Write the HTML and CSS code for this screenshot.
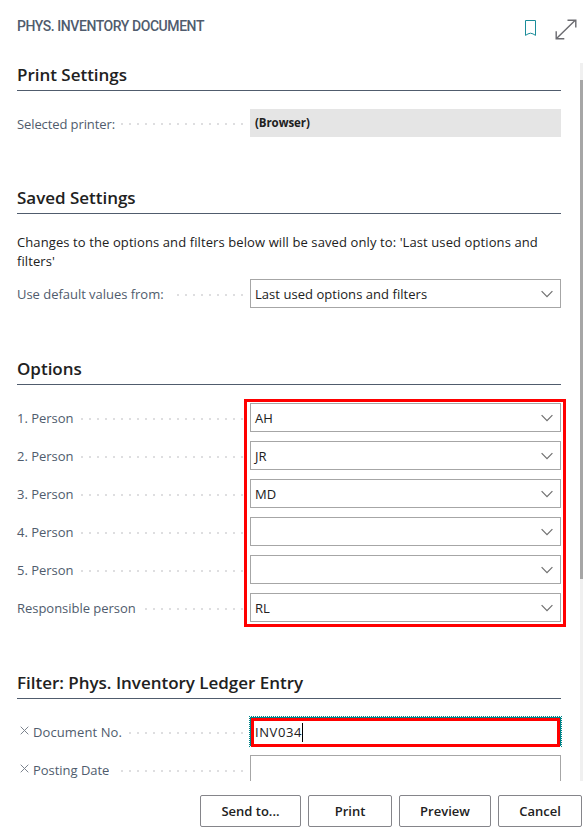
FILE: index.html
```html
<!DOCTYPE html>
<html lang="en">
<head>
<meta charset="utf-8">
<title>Phys. Inventory Document</title>
<link rel="stylesheet" href="styles.css">
</head>
<body>
<svg class="defs" width="0" height="0">
  <symbol id="chevron" viewBox="0 0 12 8"><path d="M.6 1.1L6 6.6l5.4-5.5" fill="none" stroke="#707070" stroke-width="1.2"/></symbol>
  <symbol id="cross" viewBox="0 0 9 9"><path d="M.7.7l7.6 7.6M8.3.7L.7 8.3" fill="none" stroke="#7c838e" stroke-width="1"/></symbol>
</svg>
<div class="dialog">
  <header class="header">
    <h1 class="title">PHYS. INVENTORY DOCUMENT</h1>
    <svg class="bookmark" width="11" height="16" viewBox="0 0 11 16"><path d="M.5.5h10v14.9L8 13.9l-2.5-.7-2.5.7-2.5 1.5z" fill="none" stroke="#1a8c99" stroke-width="1"/></svg>
    <svg class="expand" width="22" height="21" viewBox="0 0 22 21"><path d="M1.5 19.5L20.5 1M12.5 1.2h8.3v7.2M1.2 12.2v7.6h8.1" fill="none" stroke="#6b6b70" stroke-width="1.4"/></svg>
  </header>

  <div class="viewport">
    <main class="content">
      <section class="group">
        <h2 class="heading">Print Settings</h2>
        <div class="row row-printer">
          <span class="label label-printer">Selected printer:</span><span class="dots"></span>
          <div class="field readonly">(Browser)</div>
        </div>
      </section>

      <section class="group group-saved">
        <h2 class="heading">Saved Settings</h2>
        <p class="note">Changes to the options and filters below will be saved only to: 'Last used options and filters'</p>
        <div class="row">
          <span class="label">Use default values from:</span><span class="dots dots-far"></span>
          <div class="field">Last used options and filters<svg class="chevron"><use href="#chevron"/></svg></div>
        </div>
      </section>

      <section class="group group-options">
        <h2 class="heading">Options</h2>
        <div class="rows persons">
          <div class="row"><span class="label">1. Person</span><span class="dots"></span><div class="field">AH<svg class="chevron"><use href="#chevron"/></svg></div></div>
          <div class="row"><span class="label">2. Person</span><span class="dots"></span><div class="field">JR<svg class="chevron"><use href="#chevron"/></svg></div></div>
          <div class="row"><span class="label">3. Person</span><span class="dots"></span><div class="field">MD<svg class="chevron"><use href="#chevron"/></svg></div></div>
          <div class="row"><span class="label">4. Person</span><span class="dots"></span><div class="field"><svg class="chevron"><use href="#chevron"/></svg></div></div>
          <div class="row"><span class="label">5. Person</span><span class="dots"></span><div class="field"><svg class="chevron"><use href="#chevron"/></svg></div></div>
          <div class="row"><span class="label">Responsible person</span><span class="dots"></span><div class="field">RL<svg class="chevron"><use href="#chevron"/></svg></div></div>
          <div class="highlight"></div>
        </div>
      </section>

      <section class="group group-filter">
        <h2 class="heading">Filter: Phys. Inventory Ledger Entry</h2>
        <div class="rows">
          <div class="row"><svg class="cross"><use href="#cross"/></svg><span class="label label-doc">Document No.</span><span class="dots"></span><div class="field focused"><span class="value">INV034</span><i class="caret"></i><div class="highlight-field"></div></div></div>
          <div class="row"><svg class="cross"><use href="#cross"/></svg><span class="label label-clip">Posting Date</span><span class="dots"></span><div class="field"></div></div>
        </div>
      </section>
    </main>
    <div class="scrollbar"><div class="thumb"></div></div>
  </div>

  <footer class="footer">
    <button class="btn btn-send">Send to...</button>
    <button class="btn btn-print">Print</button>
    <button class="btn btn-preview">Preview</button>
    <button class="btn btn-cancel">Cancel</button>
  </footer>
</div>
</body>
</html>
```
FILE: styles.css
```css
* { box-sizing: border-box; }
body {
  margin: 0;
  background: #fff;
  color: #212121;
  font: 13px/19px "Open Sans", "Noto Sans", sans-serif;
}
.defs { position: absolute; }
.dialog {
  height: 835px;
  display: flex;
  flex-direction: column;
  overflow: hidden;
}
.header {
  flex: none;
  height: 63px;
  padding: 17px 6px 0 17px;
  display: flex;
  align-items: flex-start;
}
.title {
  margin: 0;
  flex: 1;
  font: 500 14px/18px Roboto, sans-serif;
  letter-spacing: -0.44px;
  color: #505c6d;
}
.bookmark { margin: 3px 19px 0 0; }
.expand { margin: 2px 0 0; }

.viewport {
  flex: none;
  height: 718px;
  display: flex;
  overflow: hidden;
}
.content { flex: 1; padding: 0 19px 0 17px; }
.scrollbar { width: 3px; background: #f0f0f0; padding-top: 17px; }
.thumb { height: 499px; background: #a6a6a6; }

.heading {
  margin: 0 0 18px;
  height: 28px;
  border-bottom: 1px solid #505c6d;
  font-size: 17px;
  font-weight: 600;
  line-height: 24px;
  letter-spacing: -0.02px;
}
.group-saved { margin-top: 49px; }
.group-saved .heading { margin-bottom: 19px; }
.group-options { margin-top: 49px; }
.group-filter { margin-top: 49px; }
.note { margin: 0 0 8px; letter-spacing: 0.1px; }
.rows { display: flex; flex-direction: column; gap: 9px; }
.persons { position: relative; }

.row { display: flex; align-items: center; height: 29px; }
.row-printer { height: 28px; }
.label {
  padding-top: 2px;
  color: #505c6d;
  white-space: nowrap;
  letter-spacing: -0.03px;
}
.label-printer { letter-spacing: -0.1px; }
.label-doc { letter-spacing: 0.1px; }
.label-clip { height: 17px; overflow: hidden; padding-top: 0; }
.dots {
  flex: 1;
  height: 2px;
  margin: 2px 7px 0 6px;
  background: repeating-linear-gradient(to left, #dedee0 0 2px, transparent 2px 8px);
}
.dots-far { margin-left: 12px; }
.field {
  position: relative;
  flex: none;
  width: 311px;
  height: 29px;
  padding: 1px 7px 0 4px;
  border: 1px solid #a6a6a6;
  display: flex;
  align-items: center;
  letter-spacing: 0.04px;
}
.readonly {
  height: 28px;
  padding: 0 5px 2px;
  border: 0;
  background: #e5e5e5;
  font-size: 11.5px;
  font-weight: 700;
  letter-spacing: -0.08px;
}
.chevron { width: 12px; height: 8px; margin: 0 0 1px auto; }
.cross { width: 9px; height: 9px; margin: 0 4px 3px 3px; }

.focused { border-color: #008489; outline: 1px dotted #008489; }
.value { letter-spacing: 0.6px; }
.caret { width: 1px; height: 19px; background: #000; }
.highlight {
  position: absolute;
  top: -4px;
  left: 227px;
  width: 322px;
  height: 228px;
  border: 3px solid #f00;
}
.highlight-field {
  position: absolute;
  inset: 0 0 -2px 0;
  border: 3px solid #f00;
}

.footer {
  flex: 1;
  display: flex;
  justify-content: flex-end;
  gap: 7px;
  padding: 14px 1px 0 0;
}
.btn {
  height: 32px;
  padding: 0;
  border: 1px solid #85858a;
  border-radius: 2px;
  background: #fff;
  color: #212121;
  font: 600 13px/18px "Open Sans", "Noto Sans", sans-serif;
}
.btn-send { width: 101px; }
.btn-print { width: 84px; }
.btn-preview { width: 92px; }
.btn-cancel { width: 84px; }
```
